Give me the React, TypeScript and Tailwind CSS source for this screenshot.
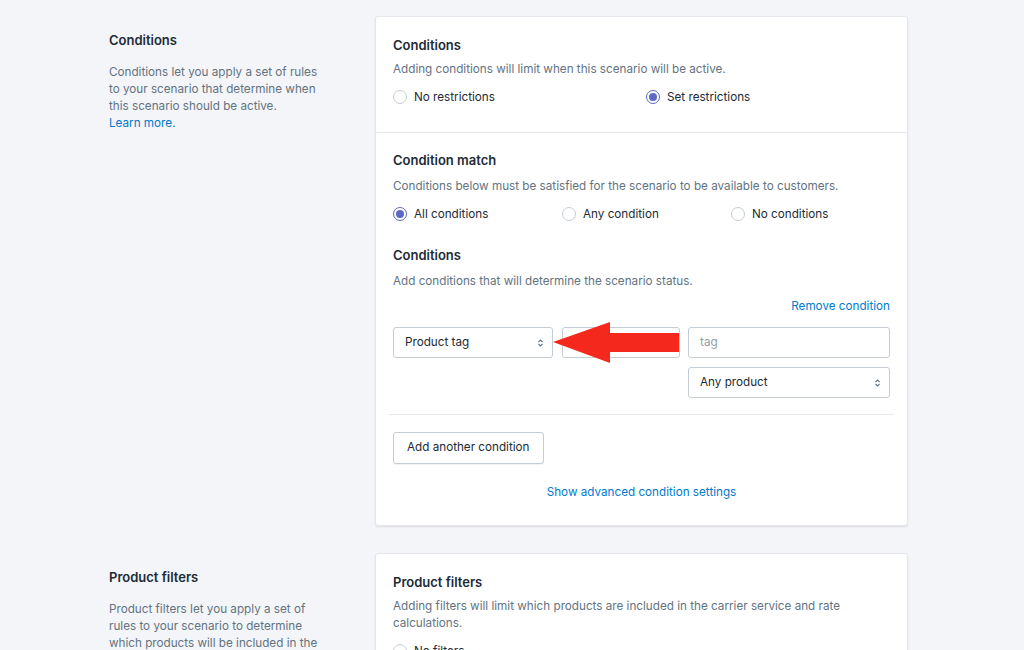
import React from "react";

const font = { fontFamily: "Inter, 'Noto Sans', sans-serif" };

function Radio({ checked, label }: { checked?: boolean; label: string }) {
  return (
    <label className="flex items-center gap-[7px] text-[11.7px] leading-[18px] text-[#212b36]">
      <span
        className={
          "flex h-[14px] w-[14px] items-center justify-center rounded-full border bg-white " +
          (checked ? "border-[#5c6ac4]" : "border-[#c4cdd5]")
        }
      >
        {checked && <span className="h-[8px] w-[8px] rounded-full bg-[#5c6ac4]" />}
      </span>
      {label}
    </label>
  );
}

function Caret() {
  return (
    <svg width="7" height="10" viewBox="0 0 7 10" className="text-[#637381]">
      <path d="M1.5 4 L3.5 2 L5.5 4" fill="none" stroke="currentColor" strokeWidth="1.1" />
      <path d="M1.5 6 L3.5 8 L5.5 6" fill="none" stroke="currentColor" strokeWidth="1.1" />
    </svg>
  );
}

function Select({ value, className }: { value: string; className: string }) {
  return (
    <div
      className={
        "flex h-[31px] items-center justify-between rounded-[3px] border border-[#c4cdd5] bg-white pl-[11px] pr-[8px] text-[11.7px] text-[#212b36] " +
        className
      }
    >
      <span>{value}</span>
      <Caret />
    </div>
  );
}

export default function App() {
  return (
    <main className="min-h-screen overflow-hidden bg-[#f4f5f8]" style={font}>
      <div className="flex pl-[109px] pt-[16px]">
        {/* Left description */}
        <div className="w-[266px] pt-[14px] pr-[50px]">
          <h2 className="text-[13px] font-semibold leading-[20px] text-[#212b36]">Conditions</h2>
          <p className="mt-[14px] text-[11.7px] leading-[17px] text-[#637381]">
            Conditions let you apply a set of rules to your scenario that determine when this scenario should be active.
            <br />
            <a className="text-[#007ace]">Learn more.</a>
          </p>
        </div>

        {/* Card */}
        <div className="w-[533px] rounded-[3px] border border-[#e3e6ea] bg-white shadow-[0_1px_2px_rgba(63,63,68,0.12)]">
          <section className="border-b border-[#e6e8eb] px-[17px] pt-[18px] pb-[26px]">
            <h3 className="text-[13px] font-semibold leading-[20px] text-[#212b36]">Conditions</h3>
            <p className="mt-[6px] text-[11.7px] leading-[17px] text-[#637381]">
              Adding conditions will limit when this scenario will be active.
            </p>
            <div className="mt-[10px] flex">
              <div className="w-[253px]">
                <Radio label="No restrictions" />
              </div>
              <Radio checked label="Set restrictions" />
            </div>
          </section>

          <section className="px-[17px] pt-[17px] pb-[24px]">
            <h3 className="text-[13px] font-semibold leading-[20px] text-[#212b36]">Condition match</h3>
            <p className="mt-[8px] text-[11.7px] leading-[17px] text-[#637381]">
              Conditions below must be satisfied for the scenario to be available to customers.
            </p>
            <div className="mt-[10px] flex">
              <div className="w-[169px]">
                <Radio checked label="All conditions" />
              </div>
              <div className="w-[169px]">
                <Radio label="Any condition" />
              </div>
              <Radio label="No conditions" />
            </div>

            <h3 className="mt-[22px] text-[13px] font-semibold leading-[20px] text-[#212b36]">Conditions</h3>
            <p className="mt-[8px] text-[11.7px] leading-[17px] text-[#637381]">
              Add conditions that will determine the scenario status.
            </p>
            <div className="mt-[8px] flex justify-end">
              <a className="text-[11.7px] leading-[17px] text-[#007ace]">Remove condition</a>
            </div>

            <div className="relative mt-[12px] flex items-start">
              <Select value="Product tag" className="w-[160px]" />
              <div className="ml-[9px] h-[31px] w-[118px] rounded-[3px] border border-[#c4cdd5] bg-white" />
              <div className="ml-[8px] flex flex-1 flex-col gap-[9px]">
                <div className="flex h-[31px] items-center rounded-[3px] border border-[#c4cdd5] bg-white px-[11px] text-[11.7px] text-[#919eab]">
                  tag
                </div>
                <Select value="Any product" className="w-full" />
              </div>

              {/* Red arrow annotation */}
              <svg
                className="absolute left-[160px] top-[-5px]"
                width="127"
                height="42"
                viewBox="0 0 127 42"
              >
                <polygon points="0,20 57,0 57,11 126,11 126,30 57,30 57,41" fill="#f5281d" />
              </svg>
            </div>

            <div className="-mx-[4px] mt-[16px] border-t border-[#e6e8eb]" />

            <button className="mt-[17px] h-[32px] rounded-[3px] border border-[#c4cdd5] bg-white px-[13px] text-[11.7px] text-[#212b36] shadow-[0_1px_0_rgba(22,29,37,0.05)]">
              Add another condition
            </button>

            <div className="mt-[20px] text-center text-[11.7px] leading-[17px] text-[#007ace]">
              Show advanced condition settings
            </div>
          </section>
        </div>
      </div>

      {/* Product filters section */}
      <div className="mt-[27px] flex pl-[109px]">
        <div className="w-[266px] pt-[14px] pr-[50px]">
          <h2 className="text-[13px] font-semibold leading-[20px] text-[#212b36]">Product filters</h2>
          <p className="mt-[14px] text-[11.7px] leading-[17px] text-[#637381]">
            Product filters let you apply a set of rules to your scenario to determine which products will be included in the carrier service and rate calculations.
          </p>
        </div>
        <div className="w-[533px] rounded-[3px] border border-[#e3e6ea] bg-white px-[17px] pt-[18px] pb-[20px] shadow-[0_1px_2px_rgba(63,63,68,0.12)]">
          <h3 className="text-[13px] font-semibold leading-[20px] text-[#212b36]">Product filters</h3>
          <p className="mt-[6px] text-[11.7px] leading-[17px] text-[#637381]">
            Adding filters will limit which products are included in the carrier service and rate calculations.
          </p>
          <div className="mt-[10px]">
            <Radio label="No filters" />
          </div>
        </div>
      </div>
    </main>
  );
}
